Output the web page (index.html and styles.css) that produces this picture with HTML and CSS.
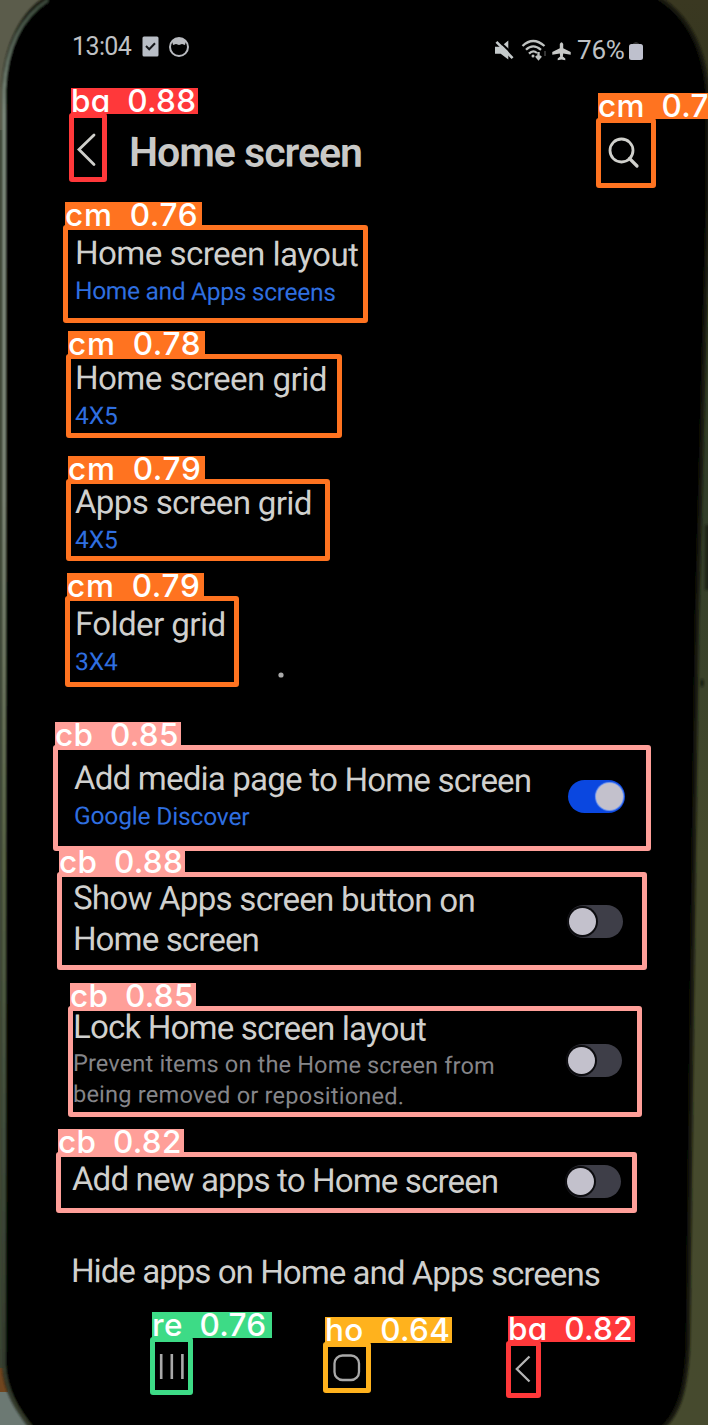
FILE: index.html
```
<!DOCTYPE html>
<html lang="en">
<head>
<meta charset="utf-8">
<title>Home screen settings</title>
<link rel="stylesheet" href="styles.css">
</head>
<body>
<div class="stage">
  <svg class="phone" viewBox="0 0 708 1425" aria-hidden="true">
    <defs>
      <linearGradient id="desk" x1="0" y1="0" x2="0" y2="1"><stop offset="0" stop-color="#3a3821"/><stop offset=".08" stop-color="#34371f"/><stop offset=".36" stop-color="#313d28"/><stop offset=".6" stop-color="#464a2c"/><stop offset="1" stop-color="#464a2e"/></linearGradient>
      <linearGradient id="rim" x1="0" y1="0" x2="0" y2="1"><stop offset="0" stop-color="#3c4a3c"/><stop offset=".08" stop-color="#8b9a8c"/><stop offset=".35" stop-color="#8d9786"/><stop offset=".6" stop-color="#64704f"/><stop offset=".8" stop-color="#485645"/><stop offset="1" stop-color="#34392a"/></linearGradient>
      <filter id="soft"><feGaussianBlur stdDeviation="1"/></filter>
    </defs>
    <rect width="708" height="1425" fill="url(#desk)"/>
    <rect width="80" height="130" fill="#5b5c4b"/>
    <rect y="130" width="8" height="1260" fill="#3f4837"/>
    <path d="M0 1388H50V1425H0Z" fill="#6c7973"/>
    <path d="M0 1368H8V1392H0Z" fill="#70451e"/>
    <g filter="url(#soft)">
      <path d="M52 -4C24 8 5 45 4 90V1365C5 1390 16 1408 33 1430H660C678 1415 686 1392 688 1345L692 1000L697 620L708 200V100C706 52 690 16 655 -4Z" fill="#000" stroke="#15180f" stroke-width="4"/>
      <path d="M48 0C20 18 6 50 4 90V1365C6 1390 16 1408 32 1428" fill="none" stroke="url(#rim)" stroke-width="3"/>
      <rect x="705" y="525" width="6" height="65" fill="#1c2116"/>
      <ellipse cx="702" cy="683" rx="1.5" ry="4" fill="#161a0e"/>
    </g>
    <circle cx="281" cy="675" r="2.6" fill="#aaa"/>
  </svg>

  <main class="screen">
    <header class="status">
      <div class="status-left">
        <span class="clock">13:04</span>
        <svg class="ic-task" viewBox="0 0 17 21"><rect x=".5" y=".5" width="16" height="20" rx="1.5" fill="#b9bec6"/><path d="M4 10l3.2 3.2L13 7.2" fill="none" stroke="#15171a" stroke-width="2"/></svg>
        <svg class="ic-face" viewBox="0 0 22 22"><circle cx="11" cy="11" r="9" fill="none" stroke="#b9bbc0" stroke-width="2"/><path d="M4 5Q11 -1 18 5L17 9L14 8L11 9L8 8L5 9Z" fill="#b9bbc0"/></svg>
      </div>
      <div class="status-right">
        <svg class="ic-mute" viewBox="0 0 20 20"><path d="M0 6.5H6L14 0V20L6 14H0Z" fill="#c5cacb"/><path d="M3.5 0L20 15.5" stroke="#000" stroke-width="2.2"/><path d="M1.5 1.5L18.5 18.5" stroke="#c5cacb" stroke-width="2.8"/></svg>
        <svg class="ic-wifi" viewBox="0 0 26 22"><g fill="none" stroke="#bfc2c0" stroke-width="2.3"><path d="M1.5 7Q12 -3 23.5 7"/><path d="M5 10.8Q12 4 20 10.8"/><path d="M8 14.6Q12 10.5 16 14"/></g><circle cx="12" cy="17" r="1.5" fill="#bfc2c0"/><path d="M17.5 13V18M15 17L17.5 20L20 17" fill="none" stroke="#bfc2c0" stroke-width="2.4"/><path d="M24 17V12" stroke="#444" stroke-width="1.5"/></svg>
        <svg class="ic-plane" viewBox="0 0 20 20"><path d="M8.2 2.5Q10 -1 11.8 2.5V7.2L19.7 11V14L11.8 12.7L11.4 15.8L14 17.8V19.8L10 18.9L6 19.8V17.8L8.6 15.8L8.2 12.7L.3 14V11L8.2 7.2Z" fill="#c8c9c7"/></svg>
        <span class="percent">76%</span>
        <svg class="ic-batt" viewBox="0 0 14 20"><path d="M4 2.5Q7 -.5 10 2.5V4H4Z" fill="#333"/><rect y="3" width="14" height="16" rx="2.5" fill="#bec0cd"/></svg>
      </div>
    </header>

    <div class="titlebar">
      <svg class="ic-back" viewBox="0 0 20 34"><path d="M17 2L2 16.5L17 31.5" fill="none" stroke="#cfcfcb" stroke-width="2.8" stroke-linecap="round"/></svg>
      <h1 class="title">Home screen</h1>
      <svg class="ic-search" viewBox="0 0 32 32"><circle cx="13.5" cy="13.5" r="11.5" fill="none" stroke="#d0d0cc" stroke-width="2.8"/><path d="M21.5 21.5L29 29" stroke="#d0d0cc" stroke-width="3.2" stroke-linecap="round"/></svg>
    </div>

    <section class="rows">
      <div class="row r1"><div class="copy"><p class="name n1">Home screen layout</p><p class="value v1">Home and Apps screens</p></div></div>
      <div class="row r2"><div class="copy"><p class="name n2">Home screen grid</p><p class="value">4X5</p></div></div>
      <div class="row r3"><div class="copy"><p class="name n3">Apps screen grid</p><p class="value">4X5</p></div></div>
      <div class="row r4"><div class="copy"><p class="name n4">Folder grid</p><p class="value">3X4</p></div></div>
      <div class="row r5"><div class="copy"><p class="name n5">Add media page to Home screen</p><p class="value v5">Google Discover</p></div><span class="toggle on"></span></div>
      <div class="row r6"><div class="copy"><p class="name n6">Show Apps screen button on</p><p class="name n6b">Home screen</p></div><span class="toggle"></span></div>
      <div class="row r7"><div class="copy"><p class="name n7">Lock Home screen layout</p><p class="hint h1">Prevent items on the Home screen from</p><p class="hint h2">being removed or repositioned.</p></div><span class="toggle"></span></div>
      <div class="row r8"><div class="copy"><p class="name n8">Add new apps to Home screen</p></div><span class="toggle"></span></div>
      <div class="row r9"><div class="copy"><p class="name n9">Hide apps on Home and Apps screens</p></div></div>
    </section>

    <nav class="navbar">
      <svg class="ic-recents" viewBox="0 0 26 27"><path d="M2.2 1V26M12.8 1V26M23.4 1V26" stroke="#a9a9a9" stroke-width="2.6"/></svg>
      <svg class="ic-home" viewBox="0 0 28 28"><rect x="1.5" y="1.5" width="24.5" height="24.5" rx="8" fill="none" stroke="#a9a9a9" stroke-width="2.3"/></svg>
      <svg class="ic-navback" viewBox="0 0 16 28"><path d="M14.5 1.5L1.8 14L14.5 26.5" fill="none" stroke="#b4b4b4" stroke-width="2.3"/></svg>
    </nav>
  </main>

  <div class="marks">
    <div class="mark red b1"><span class="tag w127">ba 0.88</span></div>
    <div class="mark orange b2"><span class="tag w110">cm 0.7</span></div>
    <div class="mark low orange b3"><span class="tag w137">cm 0.76</span></div>
    <div class="mark low orange b4"><span class="tag w137">cm 0.78</span></div>
    <div class="mark low orange b5"><span class="tag w137">cm 0.79</span></div>
    <div class="mark low orange b6"><span class="tag w137">cm 0.79</span></div>
    <div class="mark low pink b7"><span class="tag w126">cb 0.85</span></div>
    <div class="mark low pink b8"><span class="tag w126">cb 0.88</span></div>
    <div class="mark low pink b9"><span class="tag w126">cb 0.85</span></div>
    <div class="mark low pink b10"><span class="tag w126">cb 0.82</span></div>
    <div class="mark green b11"><span class="tag w120">re 0.76</span></div>
    <div class="mark amber b12"><span class="tag w127">ho 0.64</span></div>
    <div class="mark red b13"><span class="tag w127">ba 0.82</span></div>
  </div>
</div>
</body>
</html>
```
FILE: styles.css
```
* { box-sizing: border-box; }
body { margin: 0; background: #000; }
h1, p { margin: 0; }
svg { display: block; flex: none; }

.stage { position: relative; width: 708px; height: 1425px; overflow: hidden; font-family: Roboto, "Liberation Sans", sans-serif; }
.phone { position: absolute; inset: 0; width: 708px; height: 1425px; }
.screen { position: relative; height: 1425px; display: flex; flex-direction: column; color: #d0d0ce; }

/* status bar */
.status { height: 80px; flex: none; display: flex; justify-content: space-between; align-items: flex-start; padding: 0 65px 0 72px; }
.status-left, .status-right { display: flex; align-items: flex-start; color: #bfc1c4; white-space: nowrap; }
.clock { font-size: 25px; line-height: 30px; width: 70px; margin-top: 32px; letter-spacing: -.6px; }
.ic-task { width: 17px; height: 21px; margin-top: 36px; }
.ic-face { width: 22px; height: 22px; margin: 36px 0 0 9px; }
.ic-mute { width: 19px; height: 20px; margin-top: 40px; }
.ic-wifi { width: 26px; height: 22px; margin: 39px 0 0 7px; }
.ic-plane { width: 19px; height: 20px; margin: 41px 0 0 5px; }
.percent { font-size: 26px; line-height: 30px; width: 49px; margin: 35px 0 0 6px; letter-spacing: -.2px; }
.ic-batt { width: 14px; height: 20px; margin: 41px 0 0 3px; }

/* title bar */
.titlebar { height: 153px; flex: none; display: flex; align-items: flex-start; padding-left: 77px; }
.ic-back { width: 20px; height: 34px; margin-top: 53px; }
.title { font-size: 41px; line-height: 48px; font-weight: 600; width: 479px; margin: 48px 0 0 32px; color: #c9c9c7; white-space: nowrap; letter-spacing: -1px; transform: rotate(.2deg); transform-origin: 0 50%; }
.ic-search { width: 32px; height: 32px; margin-top: 57px; }

/* settings rows */
.rows { flex: none; height: 1099px; padding-left: 75px; }
.row { display: flex; justify-content: space-between; align-items: flex-start; }
.r1 { height: 125px; }
.r2 { height: 124px; }
.r3 { height: 122px; }
.r4 { height: 154px; }
.r5 { height: 120px; padding-right: 83px; margin-left: -1px; }
.r6 { height: 129px; padding-right: 85px; margin-left: -2px; }
.r7 { height: 152px; padding-right: 86px; margin-left: -2px; }
.r8 { height: 92px; padding-right: 87px; margin-left: -3px; }
.r9 { margin-left: -4px; }
.name, .value, .hint { white-space: nowrap; transform: rotate(.4deg); transform-origin: 0 50%; }
.name { font-size: 33px; line-height: 40px; font-weight: 400; }
.value { font-size: 24.5px; line-height: 30px; margin-top: 3px; color: #2f6fe0; }
.hint { font-size: 23.5px; line-height: 31px; color: #858589; }
.n1, .n2 { letter-spacing: -.5px; }
.n3 { letter-spacing: -.62px; }
.n4 { letter-spacing: -.55px; }
.n5 { letter-spacing: -.77px; }
.n6 { letter-spacing: -.7px; }
.n6b { letter-spacing: -.85px; margin-top: 1px; }
.n7 { letter-spacing: -.79px; }
.n8 { letter-spacing: -.83px; }
.n9 { letter-spacing: -.93px; }
.v1 { letter-spacing: -.29px; }
.v5 { letter-spacing: -.15px; }
.h1 { margin-top: 1px; letter-spacing: .17px; }
.h2 { letter-spacing: .25px; }
.toggle { flex: none; display: flex; align-items: center; width: 56px; height: 33px; padding: 0 2px; border-radius: 17px; background: linear-gradient(90deg, #1c1c22, #3e3e48 45%); }
.toggle::before { content: ""; width: 27px; height: 27px; border-radius: 50%; background: #c3c1cc; box-shadow: 0 0 0 2px #0d0d10; }
.toggle.on { justify-content: flex-end; background: #0a47e0; width: 57px; }
.toggle.on::before { box-shadow: 0 0 1px 1px #7fa0ee; }
.r5 .toggle { margin-top: 22px; }
.r6 .toggle { margin-top: 27px; }
.r7 .toggle { margin-top: 37px; }
.r8 .toggle { margin-top: 6px; }

/* navigation bar */
.navbar { display: flex; align-items: flex-start; padding: 20px 0 0 159px; }
.ic-recents { width: 26px; height: 27px; margin-top: 1px; }
.ic-home { width: 28px; height: 28px; margin: 2px 0 0 148px; }
.ic-navback { width: 16px; height: 28px; margin: 3px 0 0 154px; }

/* detection boxes lying over the screen */
.marks { position: absolute; inset: 0; }
.mark { position: absolute; border: 5px solid var(--c); border-radius: 3px; }
.tag { position: absolute; left: -3px; top: -30px; height: 26px; background: var(--c); color: #fff; font: 500 31.5px/26px Inter, sans-serif; font-feature-settings: "cv11"; white-space: pre; letter-spacing: .3px; word-spacing: 8px; }
.low .tag { top: -28px; }
.w110 { width: 110px; }
.w120 { width: 120px; }
.w126 { width: 126px; }
.w127 { width: 127px; }
.w137 { width: 137px; letter-spacing: .7px; }
.red { --c: #ff383a; }
.orange { --c: #ff7320; }
.pink { --c: #ff9f99; }
.green { --c: #3ddb86; }
.amber { --c: #ffb21d; }
.b1 { left: 69px; top: 113px; width: 38px; height: 69px; }
.b2 { left: 596px; top: 118px; width: 60px; height: 70px; }
.b3 { left: 63px; top: 225px; width: 305px; height: 98px; }
.b4 { left: 66px; top: 354px; width: 276px; height: 84px; }
.b5 { left: 66px; top: 479px; width: 264px; height: 82px; }
.b6 { left: 65px; top: 596px; width: 174px; height: 91px; }
.b7 { left: 53px; top: 745px; width: 598px; height: 106px; }
.b8 { left: 57px; top: 872px; width: 590px; height: 98px; }
.b9 { left: 68px; top: 1006px; width: 574px; height: 111px; }
.b10 { left: 56px; top: 1152px; width: 581px; height: 61px; }
.b11 { left: 150px; top: 1337px; width: 43px; height: 58px; }
.b12 { left: 323px; top: 1342px; width: 48px; height: 51px; }
.b13 { left: 506px; top: 1341px; width: 35px; height: 57px; }
```
